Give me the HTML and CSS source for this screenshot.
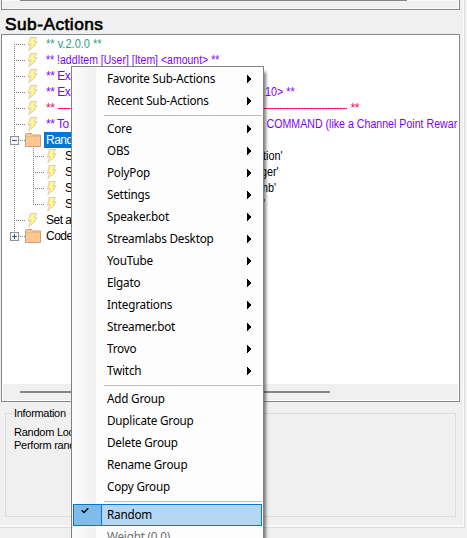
FILE: index.html
```
<!DOCTYPE html>
<html lang="en">
<head>
<meta charset="utf-8">
<title>Sub-Actions</title>
<link rel="stylesheet" href="styles.css">
</head>
<body>
<svg width="0" height="0" class="defs">
  <symbol id="bolt" viewBox="0 0 11 16"><path d="M3.5 1.5h5.8L7.4 5.6h2.9L7.2 8.8h1.6L1.8 14.7l2.1-5.4H1.5z" fill="#fff98c" stroke="#d9cfae" stroke-width="1"/><path d="M3.5 1.5L1.4 9.2h2.4l-2 5.3" fill="none" stroke="#f7cfb5" stroke-width="1"/></symbol>
  <symbol id="folder" viewBox="0 0 16 16"><path d="M.5 14.5V2.5l1-1h5l1 1.5h8v11.5z" fill="#ffc78f" stroke="#c3a27b"/><path d="M1 4.5h14" stroke="#eeb780"/></symbol>
  <symbol id="arrow" viewBox="0 0 4 8"><path d="M0 0h1v1h1v1h1v1h1v2H3v1H2v1H1v1H0z"/></symbol>
</svg>
<main class="window">
  <section class="upper"><div class="thumb"></div></section>
  <h1>Sub-Actions</h1>
  <section class="tree">
    <ul>
      <li class="first"><i class="branch"></i><svg class="bolt"><use href="#bolt"/></svg><span class="version">** v.2.0.0 **</span></li>
      <li><i class="branch"></i><svg class="bolt"><use href="#bolt"/></svg><span class="note usage">** !addItem [User] [Item] &lt;amount&gt; **</span></li>
      <li><i class="branch"></i><svg class="bolt"><use href="#bolt"/></svg><span class="note lead">** Exa</span></li>
      <li><i class="branch"></i><svg class="bolt"><use href="#bolt"/></svg><span class="note lead">** Exa</span><span class="note tail ten">:10&gt; **</span></li>
      <li><i class="branch"></i><svg class="bolt"><use href="#bolt"/></svg><span class="rule-text">** <b>-------------------------------------------------------------------------------------------------</b> **</span></li>
      <li><i class="branch"></i><svg class="bolt"><use href="#bolt"/></svg><span class="note lead">** To</span><span class="note tail command">COMMAND (like a Channel Point Rewar</span></li>
      <li><i class="branch"></i><i class="toggle"></i><svg class="folder"><use href="#folder"/></svg><span class="selected">Rand</span></li>
      <li class="child"><i class="branch"></i><i class="sub"></i><svg class="bolt"><use href="#bolt"/></svg><span class="lead">S</span><span class="tail">tion'</span></li>
      <li class="child"><i class="branch"></i><i class="sub"></i><svg class="bolt"><use href="#bolt"/></svg><span class="lead">S</span><span class="tail ger">ger'</span></li>
      <li class="child"><i class="branch"></i><i class="sub"></i><svg class="bolt"><use href="#bolt"/></svg><span class="lead">S</span><span class="tail mb">mb'</span></li>
      <li class="child end"><i class="branch"></i><i class="sub"></i><svg class="bolt"><use href="#bolt"/></svg><span class="lead">S</span><span class="tail">'</span></li>
      <li><i class="branch"></i><svg class="bolt"><use href="#bolt"/></svg><span>Set a</span></li>
      <li class="last"><i class="branch"></i><i class="toggle plus"></i><svg class="folder"><use href="#folder"/></svg><span class="code">Code</span></li>
    </ul>
    <div class="scroll"><div class="thumb"></div></div>
  </section>
  <fieldset><legend>Information</legend><p>Random Loc</p><p class="perform">Perform rand</p></fieldset>
</main>
<nav class="menu">
  <div class="item"><span>Favorite Sub-Actions</span><svg><use href="#arrow"/></svg></div>
  <div class="item"><span>Recent Sub-Actions</span><svg><use href="#arrow"/></svg></div>
  <hr>
  <div class="item"><span>Core</span><svg><use href="#arrow"/></svg></div>
  <div class="item"><span>OBS</span><svg><use href="#arrow"/></svg></div>
  <div class="item"><span>PolyPop</span><svg><use href="#arrow"/></svg></div>
  <div class="item"><span>Settings</span><svg><use href="#arrow"/></svg></div>
  <div class="item"><span>Speaker.bot</span><svg><use href="#arrow"/></svg></div>
  <div class="item"><span>Streamlabs Desktop</span><svg><use href="#arrow"/></svg></div>
  <div class="item"><span>YouTube</span><svg><use href="#arrow"/></svg></div>
  <div class="item"><span>Elgato</span><svg><use href="#arrow"/></svg></div>
  <div class="item"><span>Integrations</span><svg><use href="#arrow"/></svg></div>
  <div class="item"><span>Streamer.bot</span><svg><use href="#arrow"/></svg></div>
  <div class="item"><span>Trovo</span><svg><use href="#arrow"/></svg></div>
  <div class="item"><span>Twitch</span><svg><use href="#arrow"/></svg></div>
  <hr>
  <div class="item"><span>Add Group</span></div>
  <div class="item"><span>Duplicate Group</span></div>
  <div class="item"><span>Delete Group</span></div>
  <div class="item"><span>Rename Group</span></div>
  <div class="item"><span>Copy Group</span></div>
  <hr>
  <div class="item checked"><i><svg viewBox="0 0 8 7"><path d="M.7 3.2L3 5.5 7.3 1.2" fill="none" stroke="#000" stroke-width="1.5"/></svg></i><span>Random</span></div>
  <div class="item disabled"><span>Weight (0.0)</span></div>
</nav>
</body>
</html>
```
FILE: styles.css
```
* { box-sizing: border-box; }
body {
  margin: 0;
  height: 538px;
  overflow: hidden;
  background: #f0f0f0;
  color: #000;
  font: 12px/16px "Liberation Sans", Arial, sans-serif;
}
.defs { position: absolute; }
.window {
  width: 465px;
  height: 528px;
  border-right: 1px solid #dcdcdc;
  border-bottom: 1px solid #dcdcdc;
  box-shadow: inset -1px -2px #fafafa;
  padding-left: 1px;
}
.upper {
  width: 459px;
  height: 10px;
  border: 1px solid #828790;
  border-top: 0;
  box-shadow: inset 0 0 0 1px #f8f8f8;
}
.upper .thumb { width: 387px; height: 1px; margin-left: 18px; background: #858585; }
h1 {
  height: 24px;
  margin: 0;
  padding-left: 4px;
  font: 400 17.3px/28px "Liberation Sans", Arial, sans-serif;
  -webkit-text-stroke: .65px #000;
  letter-spacing: .48px;
}
.tree {
  width: 459px;
  height: 368px;
  border: 1px solid #828790;
  background: #fff;
  display: flex;
  flex-direction: column;
  justify-content: space-between;
  padding: 1px;
}
ul { list-style: none; margin: 0; padding: 0; }
li {
  height: 16px;
  display: flex;
  align-items: center;
  white-space: pre;
  overflow: hidden;
  padding-left: 11px;
  letter-spacing: -.5px;
}
.branch {
  width: 11px;
  height: 16px;
  margin-right: 2px;
  flex: none;
  background:
    repeating-linear-gradient(90deg, #808080 0 1px, transparent 1px 2px) 0 8px / 11px 1px no-repeat,
    repeating-linear-gradient(#808080 0 1px, transparent 1px 2px) 0 0 / 1px 16px no-repeat;
}
.first .branch { background-position: 0 8px, 0 8px; }
.last .branch { background-size: 11px 1px, 1px 8px; }
.child .branch { width: 19px; margin: 0; background-size: 0 0, 1px 16px; }
.sub {
  width: 11px;
  height: 16px;
  margin-right: 2px;
  flex: none;
  background:
    repeating-linear-gradient(90deg, #808080 0 1px, transparent 1px 2px) 0 8px / 11px 1px no-repeat,
    repeating-linear-gradient(#808080 0 1px, transparent 1px 2px) 0 0 / 1px 16px no-repeat;
}
.end .sub { background-size: 11px 1px, 1px 8px; }
.bolt { width: 11px; height: 16px; flex: none; margin: 0 8px 0 0; }
.folder { width: 16px; height: 16px; flex: none; margin: 0 3px 0 2px; }
.toggle {
  width: 9px;
  height: 9px;
  flex: none;
  margin: 1px 4px 0 -17px;
  border: 1px solid #919191;
  background:
    linear-gradient(#3550a0, #3550a0) center / 5px 1px no-repeat,
    #f7f7f7;
}
.plus {
  background:
    linear-gradient(#3550a0, #3550a0) center / 5px 1px no-repeat,
    linear-gradient(#3550a0, #3550a0) center / 1px 5px no-repeat,
    #f7f7f7;
}
.version, .usage, .tail { flex: none; transform-origin: left; letter-spacing: 0; }
.version { color: #2e9b83; transform: scaleX(.92); }
.note { color: #8000ff; }
.usage { transform: scaleX(.875); }
.tail { transform: scaleX(.9); }
.ger { margin-left: -2px; }
.mb { margin-left: -4px; }
.ten { margin-left: -1px; }
.rule-text { color: #ff0066; display: flex; letter-spacing: -.4px; }
.rule-text b { font-weight: 400; width: 290px; overflow: hidden; letter-spacing: -1px; }
.lead { width: 217px; flex: none; overflow: hidden; }
.child .lead { width: 198px; }
.command { padding-left: 4px; transform: scaleX(.885); }
.selected { height: 16px; width: 40px; background: #0078d7; color: #fff; padding-left: 2px; }
.code { padding-left: 2px; }
.scroll { height: 16px; background: #f0f0f0; padding: 7px 0 0 17px; flex: none; }
.scroll .thumb { height: 2px; width: 310px; background: #858585; }
fieldset {
  width: 451px;
  height: 111px;
  margin: 4px 0 0 4px;
  padding: 6px 0 0 8px;
  border: 1px solid #dcdcdc;
  letter-spacing: -.25px;
  font-size: 11px;
  line-height: 13px;
}
legend { padding: 0 2px 0 0; line-height: 14px; letter-spacing: -.3px; }
p { margin: 0; }
.menu {
  position: absolute;
  left: 71px;
  top: 66px;
  width: 193px;
  height: 490px;
  border: 1px solid #808080;
  background: linear-gradient(90deg, #fcfcfc, #f0f0f0 24px, #fdfdfd 24px);
  padding: 1px;
  box-shadow: 3px 5px 3px -1px rgba(0,0,0,.5);
  font: 11.7px/20px "Noto Sans", sans-serif;
  letter-spacing: -.2px;
}
.item {
  height: 22px;
  display: flex;
  align-items: center;
  justify-content: space-between;
  padding: 0 11px 0 34px;
  white-space: nowrap;
}
.item > span { margin-bottom: 2px; }
.item > svg { width: 4px; height: 8px; }
hr { height: 1px; border: 0; margin: 3px 0 2px 31px; background: #bdbdbd; }
.checked {
  background: #b3d7f3;
  border: 1px solid #0078d7;
  padding: 0;
  justify-content: flex-start;
}
.checked i {
  width: 28px;
  height: 20px;
  margin-right: 5px;
  background: #80bcea;
  border-right: 1px solid #0078d7;
  padding: 2px 0 0 7px;
  display: flex;
}
.checked i svg { width: 8px; height: 7px; }
.disabled { color: #6d6d6d; }
```
